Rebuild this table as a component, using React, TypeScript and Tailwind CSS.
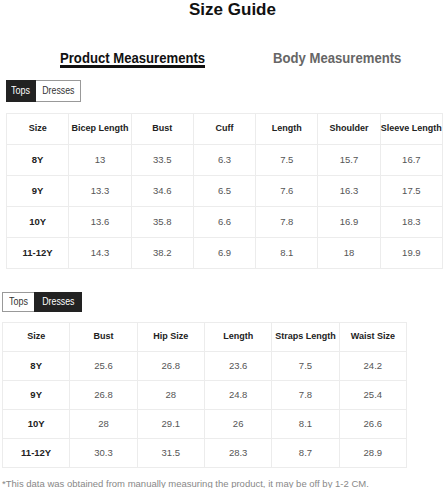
import React from "react";

const topsHead = ["Size", "Bicep Length", "Bust", "Cuff", "Length", "Shoulder", "Sleeve Length"];
const topsRows = [
  ["8Y", "13", "33.5", "6.3", "7.5", "15.7", "16.7"],
  ["9Y", "13.3", "34.6", "6.5", "7.6", "16.3", "17.5"],
  ["10Y", "13.6", "35.8", "6.6", "7.8", "16.9", "18.3"],
  ["11-12Y", "14.3", "38.2", "6.9", "8.1", "18", "19.9"],
];
const dressHead = ["Size", "Bust", "Hip Size", "Length", "Straps Length", "Waist Size"];
const dressRows = [
  ["8Y", "25.6", "26.8", "23.6", "7.5", "24.2"],
  ["9Y", "26.8", "28", "24.8", "7.8", "25.4"],
  ["10Y", "28", "29.1", "26", "8.1", "26.6"],
  ["11-12Y", "30.3", "31.5", "28.3", "8.7", "28.9"],
];

function Table({ head, rows, rowH, className }: { head: string[]; rows: string[][]; rowH: string; className: string }) {
  return (
    <table className={`table-fixed border-collapse ${className}`}>
      <tbody>
        <tr className={rowH}>
          {head.map((h) => (
            <td key={h} className="border border-[#ececec] text-center font-bold text-[#222] text-[9px] p-0 whitespace-nowrap">
              {h}
            </td>
          ))}
        </tr>
        {rows.map((r) => (
          <tr key={r[0]} className={rowH}>
            {r.map((c, i) => (
              <td
                key={i}
                className={`border border-[#ececec] text-center text-[9.5px] p-0 ${i === 0 ? "font-bold text-[#222]" : "text-[#555]"}`}
              >
                {c}
              </td>
            ))}
          </tr>
        ))}
      </tbody>
    </table>
  );
}

function Toggle({ active, className, h }: { active: 0 | 1; className: string; h: string }) {
  const on = "bg-[#222] text-white border border-[#222]";
  const off = "bg-white text-[#333] border border-[#999]";
  return (
    <div className={`flex text-[10px] leading-[12px] ${h} ${className}`}>
      <div className={`flex items-center justify-center ${active === 0 ? on + " w-[30px]" : off + " w-[32px] border-r-0"}`}>
        <span className="inline-block scale-x-[0.9]">Tops</span>
      </div>
      <div className={`flex items-center justify-center ${active === 1 ? on + " w-[48px]" : off + " w-[45px] border-l-0"}`}>
        <span className="inline-block scale-x-[0.88]">Dresses</span>
      </div>
    </div>
  );
}

export default function App() {
  return (
    <div className="w-[445px] h-[488px] bg-white overflow-hidden" style={{ fontFamily: '"Liberation Sans", Arial, sans-serif' }}>
      <div className="text-center font-bold text-[17px] leading-[19px] text-[#111] pl-[20px]">Size Guide</div>
      <div className="flex items-start mt-[31px] pl-[60px] gap-[68px] text-[15px] leading-[15px] font-bold">
        <div className="w-[145px] h-[15px] border-b-[3px] border-[#111] box-content whitespace-nowrap">
          <span className="inline-block origin-left scale-x-[0.875] text-[#111]">Product Measurements</span>
        </div>
        <div className="w-[127px] h-[15px] whitespace-nowrap">
          <span className="inline-block origin-left scale-x-[0.875] text-[#666]">Body Measurements</span>
        </div>
      </div>
      <Toggle active={0} className="ml-[6px] mt-[12px]" h="h-[22px]" />
      <Table head={topsHead} rows={topsRows} rowH="h-[31px]" className="ml-[6px] mt-[11px] w-[437px]" />
      <Toggle active={1} className="ml-[2px] mt-[23px]" h="h-[20px]" />
      <Table head={dressHead} rows={dressRows} rowH="h-[29px]" className="ml-[2px] mt-[10px] w-[405px]" />
      <div className="ml-[2px] mt-[10px] text-[9.5px] leading-[12px] text-[#888]">
        *This data was obtained from manually measuring the product, it may be off by 1-2 CM.
      </div>
    </div>
  );
}
